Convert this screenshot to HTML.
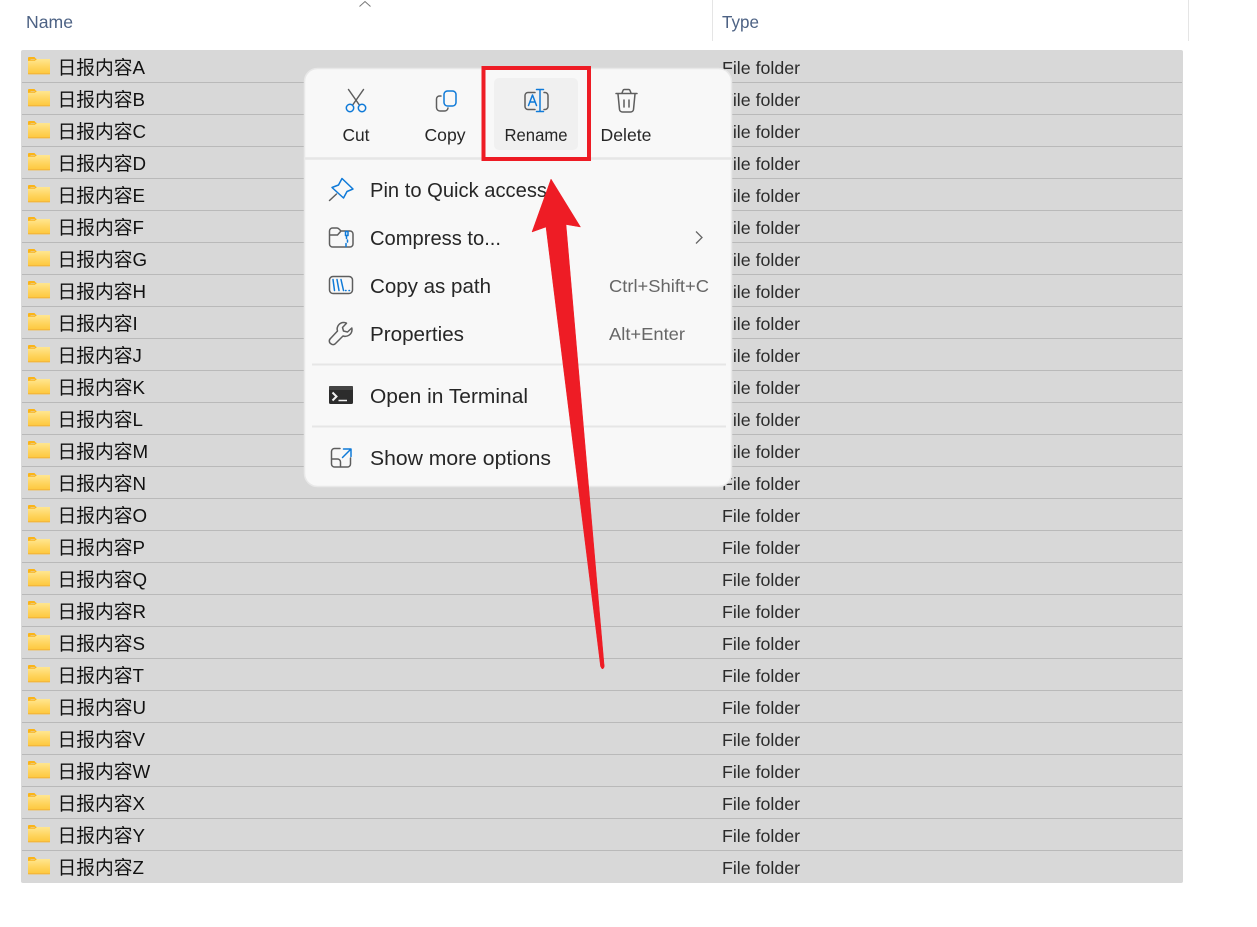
<!DOCTYPE html>
<html lang="zh"><head><meta charset="utf-8"><title>日报内容</title>
<style>
html,body{margin:0;padding:0;background:#fff;width:1257px;height:927px;overflow:hidden}
svg{display:block}
text{font-family:"Liberation Sans","Noto Sans CJK SC",sans-serif}
.n{font-size:18.75px;fill:#111}
.t{font-size:17.8px;fill:#2b2b2b}
.h{font-size:17.6px;fill:#4d6284}
.m{font-size:20.1px;fill:#262626}
.a{font-size:17.3px;fill:#262626;text-anchor:middle}
.s{font-size:17.8px;fill:#666}
.g{fill:none;stroke:#5e5e5e;stroke-width:1.5;stroke-linecap:round;stroke-linejoin:round}
.b{fill:none;stroke:#0f7ad8;stroke-width:1.5;stroke-linecap:round;stroke-linejoin:round}
</style></head><body>
<svg width="1257" height="927" viewBox="0 0 1257 927" xmlns="http://www.w3.org/2000/svg">
<defs>
<linearGradient id="fg" x1="0" y1="0" x2="0" y2="1"><stop offset="0" stop-color="#ffe690"/><stop offset=".5" stop-color="#ffd662"/><stop offset="1" stop-color="#fdc63c"/></linearGradient>
<symbol id="f" width="23" height="18" viewBox="0 0 23 18" overflow="visible">
<path d="M0 1a1 1 0 0 1 1-1h5.500l2 2.500H3L0 4z" fill="#fbb417"/>
<path d="M0 3.500h6.500l2-1.500H22v14.500a.7.7 0 0 1-.7.7H.7a.7.7 0 0 1-.7-.7z" fill="url(#fg)"/>
<path d="M0 3.500h6.500l2-1.500" fill="none" stroke="#fbb417" stroke-width=".8"/>
<path d="M0 16.700h22" stroke="#f2b238" stroke-width="1"/>
</symbol>
</defs>

<rect width="1257" height="927" fill="#fff"/>
<text class="h" x="26" y="28" textLength="47" lengthAdjust="spacingAndGlyphs">Name</text>
<text class="h" x="722" y="28" textLength="37" lengthAdjust="spacingAndGlyphs">Type</text>
<path d="M359.500 6.500L365 1.500l5.500 5" fill="none" stroke="#777" stroke-width="1"/>
<path d="M712.500 0v41M1188.500 0v41" stroke="#e5e5e5" stroke-width="1"/>

<rect x="21" y="50" width="1162" height="833" rx="2" fill="#d8d8d8"/>
<path d="M22 82.500h1160M22 114.500h1160M22 146.500h1160M22 178.500h1160M22 210.500h1160M22 242.500h1160M22 274.500h1160M22 306.500h1160M22 338.500h1160M22 370.500h1160M22 402.500h1160M22 434.500h1160M22 466.500h1160M22 498.500h1160M22 530.500h1160M22 562.500h1160M22 594.500h1160M22 626.500h1160M22 658.500h1160M22 690.500h1160M22 722.500h1160M22 754.500h1160M22 786.500h1160M22 818.500h1160M22 850.500h1160" stroke="#b9b9b9" stroke-width="1"/>

<use href="#f" x="28" y="57"/><text class="n" x="57.500" y="74">日报内容A</text><text class="t" x="722" y="74">File folder</text>
<use href="#f" x="28" y="89"/><text class="n" x="57.500" y="106">日报内容B</text><text class="t" x="722" y="106">File folder</text>
<use href="#f" x="28" y="121"/><text class="n" x="57.500" y="138">日报内容C</text><text class="t" x="722" y="138">File folder</text>
<use href="#f" x="28" y="153"/><text class="n" x="57.500" y="170">日报内容D</text><text class="t" x="722" y="170">File folder</text>
<use href="#f" x="28" y="185"/><text class="n" x="57.500" y="202">日报内容E</text><text class="t" x="722" y="202">File folder</text>
<use href="#f" x="28" y="217"/><text class="n" x="57.500" y="234">日报内容F</text><text class="t" x="722" y="234">File folder</text>
<use href="#f" x="28" y="249"/><text class="n" x="57.500" y="266">日报内容G</text><text class="t" x="722" y="266">File folder</text>
<use href="#f" x="28" y="281"/><text class="n" x="57.500" y="298">日报内容H</text><text class="t" x="722" y="298">File folder</text>
<use href="#f" x="28" y="313"/><text class="n" x="57.500" y="330">日报内容I</text><text class="t" x="722" y="330">File folder</text>
<use href="#f" x="28" y="345"/><text class="n" x="57.500" y="362">日报内容J</text><text class="t" x="722" y="362">File folder</text>
<use href="#f" x="28" y="377"/><text class="n" x="57.500" y="394">日报内容K</text><text class="t" x="722" y="394">File folder</text>
<use href="#f" x="28" y="409"/><text class="n" x="57.500" y="426">日报内容L</text><text class="t" x="722" y="426">File folder</text>
<use href="#f" x="28" y="441"/><text class="n" x="57.500" y="458">日报内容M</text><text class="t" x="722" y="458">File folder</text>
<use href="#f" x="28" y="473"/><text class="n" x="57.500" y="490">日报内容N</text><text class="t" x="722" y="490">File folder</text>
<use href="#f" x="28" y="505"/><text class="n" x="57.500" y="522">日报内容O</text><text class="t" x="722" y="522">File folder</text>
<use href="#f" x="28" y="537"/><text class="n" x="57.500" y="554">日报内容P</text><text class="t" x="722" y="554">File folder</text>
<use href="#f" x="28" y="569"/><text class="n" x="57.500" y="586">日报内容Q</text><text class="t" x="722" y="586">File folder</text>
<use href="#f" x="28" y="601"/><text class="n" x="57.500" y="618">日报内容R</text><text class="t" x="722" y="618">File folder</text>
<use href="#f" x="28" y="633"/><text class="n" x="57.500" y="650">日报内容S</text><text class="t" x="722" y="650">File folder</text>
<use href="#f" x="28" y="665"/><text class="n" x="57.500" y="682">日报内容T</text><text class="t" x="722" y="682">File folder</text>
<use href="#f" x="28" y="697"/><text class="n" x="57.500" y="714">日报内容U</text><text class="t" x="722" y="714">File folder</text>
<use href="#f" x="28" y="729"/><text class="n" x="57.500" y="746">日报内容V</text><text class="t" x="722" y="746">File folder</text>
<use href="#f" x="28" y="761"/><text class="n" x="57.500" y="778">日报内容W</text><text class="t" x="722" y="778">File folder</text>
<use href="#f" x="28" y="793"/><text class="n" x="57.500" y="810">日报内容X</text><text class="t" x="722" y="810">File folder</text>
<use href="#f" x="28" y="825"/><text class="n" x="57.500" y="842">日报内容Y</text><text class="t" x="722" y="842">File folder</text>
<use href="#f" x="28" y="857"/><text class="n" x="57.500" y="874">日报内容Z</text><text class="t" x="722" y="874">File folder</text>

<!-- context menu -->
<rect x="304.500" y="68.500" width="427" height="418" rx="13" fill="#f8f8f8" stroke="#e8e8e8" stroke-width="1.500"/>
<rect x="494" y="78" width="84" height="72" rx="5" fill="#f0f0f0"/>
<path d="M305 158.500h426" stroke="#e6e6e6" stroke-width="2.500"/>
<path d="M312 364.500h414M312 426.500h414" stroke="#e6e6e6" stroke-width="2"/>

<!-- cut -->
<path class="g" d="M348.500 89.500l10.500 15M363.500 89.500l-10.500 15"/>
<circle class="b" cx="350" cy="108" r="3.700"/><circle class="b" cx="362" cy="108" r="3.700"/>
<!-- copy -->
<path class="g" d="M441 96h-1.500a3 3 0 0 0-3 3v8.500a3.500 3.500 0 0 0 3.500 3.500h4.500a3.500 3.500 0 0 0 3.500-3"/>
<rect class="b" x="444" y="91" width="12" height="15" rx="3.500"/>
<!-- rename -->
<path class="g" d="M535 92.500h-7a3 3 0 0 0-3 3v11a3 3 0 0 0 3 3h7M544 92.500h1a3 3 0 0 1 3 3v11a3 3 0 0 1-3 3h-1"/>
<path class="b" d="M528.500 105.500l4-10.500 4 10.500M530 102h5M536.500 89.500h7M540 89.500v22M536.500 111.500h7"/>
<!-- delete -->
<path class="g" d="M616 93.500h21M622 93l1-2.500a1.500 1.500 0 0 1 1.500-1h4a1.500 1.500 0 0 1 1.500 1l1 2.500M618 94l1.500 15.500a3 3 0 0 0 3 2.500h8a3 3 0 0 0 3-2.500L635 94M624 100v7M629 100v7"/>

<text class="a" x="356" y="141" textLength="27" lengthAdjust="spacingAndGlyphs">Cut</text>
<text class="a" x="445" y="141" textLength="41" lengthAdjust="spacingAndGlyphs">Copy</text>
<text class="a" x="536" y="141" textLength="63" lengthAdjust="spacingAndGlyphs">Rename</text>
<text class="a" x="626" y="141" textLength="51" lengthAdjust="spacingAndGlyphs">Delete</text>

<!-- pin -->
<path class="b" d="M342 178.500l11 10.500-6 2.500-3.500 6.500-11.500-10.500 6.500-2.500z"/>
<path class="g" d="M329.500 200.500l7-6.500"/>
<text class="m" x="370" y="197" textLength="177" lengthAdjust="spacingAndGlyphs">Pin to Quick access</text>
<!-- compress -->
<path class="g" d="M329.500 231a3 3 0 0 1 3-3h4.500a3 3 0 0 1 2 1l2 2h9a3 3 0 0 1 3 3v10a3 3 0 0 1-3 3h-17.500a3 3 0 0 1-3-3zM329.500 235h8l3.500-4"/>
<path class="b" d="M345.500 231.500h2.500v4h-2.500zM346.500 236v2.500M347.500 240v2M346 243.500v3"/>
<text class="m" x="370" y="245" textLength="131" lengthAdjust="spacingAndGlyphs">Compress to...</text>
<path d="M696 231.500l6 6-6 6" fill="none" stroke="#666" stroke-width="1.300"/>
<!-- copy path -->
<rect class="g" x="329.500" y="276.500" width="23" height="17" rx="3.500"/>
<path class="b" d="M333 279.500l1.500 11M337 279.500l2 11M341 279.500l2.500 11M345.500 290.500h.5M349 290.500h.5" stroke-width="1.300"/>
<text class="m" x="370" y="293" textLength="121" lengthAdjust="spacingAndGlyphs">Copy as path</text>
<text class="s" x="609" y="292" textLength="100" lengthAdjust="spacingAndGlyphs">Ctrl+Shift+C</text>
<!-- wrench -->
<path class="g" d="M344 322.500a6.500 6.500 0 0 0-6.500 8.500l-7 7.500a3.200 3.200 0 0 0 .5 5.300 3.200 3.200 0 0 0 4.500-.3l7.500-7.500a6.800 6.800 0 0 0 9-6.500l-.2-1.500-4.300 4-4-1-1-3.500 4-4.300a6 6 0 0 0-2.500-.7z"/>
<text class="m" x="370" y="341" textLength="94" lengthAdjust="spacingAndGlyphs">Properties</text>
<text class="s" x="609" y="340" textLength="76" lengthAdjust="spacingAndGlyphs">Alt+Enter</text>
<!-- terminal -->
<rect x="329" y="386" width="24" height="18" rx="1.500" fill="#2c2c2c"/>
<rect x="329" y="386" width="24" height="4" rx="1" fill="#444"/>
<path d="M332.500 392.500l4 4-4 4" fill="none" stroke="#f2f2f2" stroke-width="2"/>
<path d="M338.500 400.500h8.500" stroke="#f2f2f2" stroke-width="1.500"/>
<text class="m" x="370" y="403" textLength="158" lengthAdjust="spacingAndGlyphs">Open in Terminal</text>
<!-- show more -->
<path class="g" d="M340 448.500h-5.500a3 3 0 0 0-3 3V464a3 3 0 0 0 3 3h13a3 3 0 0 0 3-3v-6M331.500 459h6a3 3 0 0 1 3 3v5"/>
<path class="b" d="M343.500 449h7.500v7.500M351 449l-8.500 8.500"/>
<text class="m" x="370" y="465" textLength="181" lengthAdjust="spacingAndGlyphs">Show more options</text>

<!-- annotations -->
<rect x="483.500" y="68" width="105.500" height="91" fill="none" stroke="#ee1c25" stroke-width="4"/>
<path d="M551 179L580.500 227 566 224.500 604 664a1.500 3 0 0 1-3 3 1 1 0 0 1-.5-1L546 227 532 232z" fill="#ee1c25" stroke="#ee1c25" stroke-width=".5" stroke-linejoin="round"/>
</svg>
</body></html>
